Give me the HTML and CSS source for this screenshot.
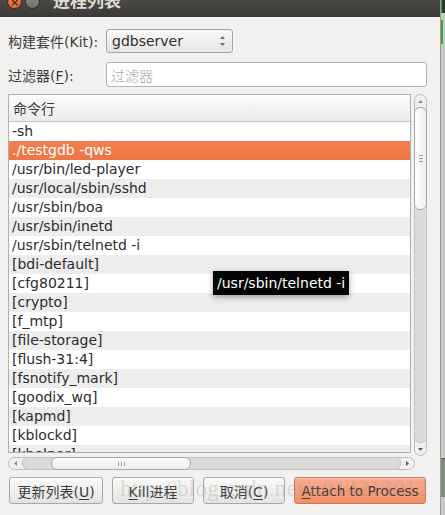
FILE: index.html
```html
<!DOCTYPE html>
<html>
<head>
<meta charset="utf-8">
<link rel="stylesheet" href="styles.css">
</head>
<body>
<div class="screen">
  <div class="dialog">
    <div class="titlebar">
      <span class="wbtn close">×</span>
      <span class="wbtn mini"></span>
      <span class="title">进程列表</span>
    </div>
    <div class="content">
      <div class="form">
        <label class="lbl">构建套件(Kit):</label>
        <div class="combo">
          <span>gdbserver</span>
          <svg class="spin" width="7" height="14" viewBox="0 0 7 14"><path d="M1 5 L3.5 2 L6 5 Z" fill="#6a6a6a"/><path d="M1 9 L3.5 12 L6 9 Z" fill="#6a6a6a"/></svg>
        </div>
        <label class="lbl">过滤器(<u>F</u>):</label>
        <div class="input">过滤器</div>
      </div>
      <div class="listarea">
        <div class="list">
          <div class="header">命令行</div>
          <div class="rows">
            <div class="row">-sh</div>
            <div class="row sel">./testgdb -qws</div>
            <div class="row">/usr/bin/led-player</div>
            <div class="row">/usr/local/sbin/sshd</div>
            <div class="row">/usr/sbin/boa</div>
            <div class="row">/usr/sbin/inetd</div>
            <div class="row">/usr/sbin/telnetd -i</div>
            <div class="row">[bdi-default]</div>
            <div class="row">[cfg80211]</div>
            <div class="row">[crypto]</div>
            <div class="row">[f_mtp]</div>
            <div class="row">[file-storage]</div>
            <div class="row">[flush-31:4]</div>
            <div class="row">[fsnotify_mark]</div>
            <div class="row">[goodix_wq]</div>
            <div class="row">[kapmd]</div>
            <div class="row">[kblockd]</div>
            <div class="row">[khelper]</div>
          </div>
        </div>
        <div class="vscroll">
          <div class="varrow"><svg width="7" height="5" viewBox="0 0 7 5"><path d="M1 4 L3.5 1 L6 4 Z" fill="#8a8a8a"/></svg></div>
          <div class="vtrough">
            <div class="vthumb"><span class="vgrip"></span></div>
          </div>
          <div class="varrow"><svg width="7" height="5" viewBox="0 0 7 5"><path d="M1 1 L3.5 4 L6 1 Z" fill="#5a5a5a"/></svg></div>
        </div>
      </div>
      <div class="hscroll">
        <div class="harrow"><svg width="5" height="7" viewBox="0 0 5 7"><path d="M4 1 L1 3.5 L4 6 Z" fill="#8a8a8a"/></svg></div>
        <div class="htrough">
          <div class="hthumb"><span class="hgrip"></span></div>
        </div>
        <div class="harrow"><svg width="5" height="7" viewBox="0 0 5 7"><path d="M1 1 L4 3.5 L1 6 Z" fill="#5a5a5a"/></svg></div>
      </div>
      <div class="buttons">
        <button class="btn b1">更新列表(<u>U</u>)</button>
        <button class="btn b2"><u>K</u>ill进程</button>
        <button class="btn b3">取消(<u>C</u>)</button>
        <button class="btn b4 primary"><u>A</u>ttach to Process</button>
      </div>
    </div>
  </div>
  <div class="edge">
    <div class="edge-top"></div>
    <div class="edge-mark"></div>
    <div class="edge-mid"></div>
    <div class="edge-low"></div>
    <div class="edge-bot"></div>
  </div>
  <div class="tooltip">/usr/sbin/telnetd -i</div>
  <div class="watermark">http://blog.csdn.net/u014213012</div>
</div>
</body>
</html>
```

FILE: styles.css
```css
html, body {
  margin: 0;
  padding: 0;
  background: #f2f1f0;
}
body {
  font-family: "DejaVu Sans", "Noto Sans CJK SC", sans-serif;
  font-size: 13.5px;
  color: #3c3c3c;
}
.screen {
  position: relative;
  width: 445px;
  height: 515px;
  display: flex;
  overflow: hidden;
}
.dialog {
  width: 440px;
  height: 515px;
  background: #f2f1f0;
  display: flex;
  flex-direction: column;
}
.titlebar {
  height: 17px;
  flex: none;
  background: linear-gradient(#4a4945, #3a3935);
  display: flex;
  align-items: flex-start;
  overflow: hidden;
}
.wbtn {
  flex: none;
  width: 15px;
  height: 15px;
  border-radius: 50%;
  margin-top: -6px;
  box-sizing: border-box;
}
.close {
  margin-left: 7px;
  background: radial-gradient(circle at 50% 40%, #f8845a, #e05a2a);
  border: 1px solid #3a2a20;
  color: #4a2a1a;
  font-size: 11px;
  line-height: 15px;
  text-align: center;
  font-weight: bold;
}
.mini {
  margin-left: 3px;
  background: linear-gradient(#8f8d87, #6f6d68);
  border: 1px solid #2e2d2a;
}
.title {
  margin-left: 13px;
  margin-top: -10px;
  color: #dfdbd2;
  font-size: 17px;
  font-weight: bold;
  line-height: 20px;
  font-family: "Noto Sans CJK SC", sans-serif;
}
.content {
  flex: 1;
  display: flex;
  flex-direction: column;
  padding: 12px 13px 0 8px;
}
.form {
  display: grid;
  grid-template-columns: 98px 1fr;
  grid-template-rows: 24px 25px;
  row-gap: 9px;
  align-items: center;
}
.lbl {
  font-size: 14px;
  color: #3c3c3c;
  white-space: nowrap;
}
.lbl u, .btn u {
  text-underline-offset: 2px;
}
.combo {
  width: 127px;
  height: 24px;
  box-sizing: border-box;
  border: 1px solid #a6a5a2;
  border-radius: 3px;
  background: linear-gradient(#f9f9f8, #e6e5e3);
  display: flex;
  align-items: center;
  justify-content: space-between;
  padding: 0 6px 0 5px;
  font-size: 14px;
  color: #2e2e2e;
}
.spin {
  display: block;
}
.input {
  height: 25px;
  box-sizing: border-box;
  border: 1px solid #b4b3b0;
  border-radius: 3px;
  background: #ffffff;
  color: #a8a8a8;
  font-size: 14px;
  display: flex;
  align-items: center;
  padding-left: 4px;
  font-family: "Noto Sans CJK SC", sans-serif;
  font-weight: 300;
}
.listarea {
  margin-top: 7px;
  height: 362px;
  flex: none;
  display: flex;
  align-items: flex-start;
  gap: 3px;
}
.list {
  width: 404px;
  height: 359px;
  box-sizing: border-box;
  border: 1px solid #b1b0ad;
  background: #ffffff;
  overflow: hidden;
}
.header {
  height: 27px;
  box-sizing: border-box;
  border-bottom: 1px solid #c6c5c2;
  background: linear-gradient(#fbfbfb, #ebebea);
  padding-left: 4px;
  display: flex;
  align-items: center;
  font-size: 14px;
  color: #3c3c3c;
}
.row {
  height: 19px;
  line-height: 19px;
  padding-left: 3px;
  white-space: nowrap;
  color: #2c2c2c;
  font-size: 14px;
  background: #ffffff;
}
.row:nth-child(even) {
  background: #ededed;
}
.row.sel {
  background: linear-gradient(#f3814f, #ee7444);
  color: #ffffff;
}
.vscroll {
  width: 13px;
  height: 362px;
  box-sizing: border-box;
  border: 1px solid #bdbcb9;
  border-radius: 7px;
  background: #f1f0ef;
  display: flex;
  flex-direction: column;
  align-items: stretch;
}
.varrow {
  height: 12px;
  flex: none;
  display: flex;
  align-items: center;
  justify-content: center;
}
.vtrough {
  flex: 1;
  background: #dcdbd9;
  border-radius: 6px;
  border: 1px solid #c4c3c0;
  margin: 0 -1px;
  display: flex;
  flex-direction: column;
}
.vthumb {
  height: 103px;
  margin: -1px;
  box-sizing: border-box;
  border: 1px solid #a9a8a5;
  border-radius: 6px;
  background: linear-gradient(90deg, #fdfdfd, #eeeeed);
  display: flex;
  align-items: center;
  justify-content: center;
}
.vgrip {
  width: 4px;
  height: 7px;
  background: repeating-linear-gradient(#9a9a9a 0 1px, transparent 1px 3px);
}
.hscroll {
  margin-top: 1px;
  width: 407px;
  height: 13px;
  flex: none;
  box-sizing: border-box;
  border: 1px solid #bdbcb9;
  border-radius: 7px;
  background: #f1f0ef;
  display: flex;
  align-items: stretch;
}
.harrow {
  width: 13px;
  flex: none;
  display: flex;
  align-items: center;
  justify-content: center;
}
.htrough {
  flex: 1;
  background: #dcdbd9;
  border-radius: 6px;
  border: 1px solid #c4c3c0;
  margin: -1px 0;
  display: flex;
}
.hthumb {
  width: 140px;
  margin: -1px 0 -1px 28px;
  box-sizing: border-box;
  border: 1px solid #a9a8a5;
  border-radius: 6px;
  background: linear-gradient(#fdfdfd, #eeeeed);
  display: flex;
  align-items: center;
  justify-content: center;
}
.hgrip {
  width: 7px;
  height: 4px;
  background: repeating-linear-gradient(90deg, #9a9a9a 0 1px, transparent 1px 3px);
}
.buttons {
  margin-top: 7px;
  display: flex;
  gap: 9px;
  padding-left: 1px;
}
.btn {
  height: 27px;
  box-sizing: border-box;
  border: 1px solid #a9a8a5;
  border-radius: 3px;
  background: linear-gradient(#fafaf9, #e4e3e1);
  font-family: "DejaVu Sans", "Noto Sans CJK SC", sans-serif;
  font-size: 14px;
  color: #3c3c3c;
  padding: 0;
  box-shadow: inset 0 1px 0 #ffffff;
}
.b1 { width: 94px; }
.b2 { width: 82px; }
.b3 { width: 82px; }
.b4 { width: 132px; font-size: 13.5px; }
.primary {
  border-color: #c97a5a;
  background: linear-gradient(#f9ad90, #f28e67);
  box-shadow: inset 0 1px 0 #fcc5ae;
  color: #3c3c3c;
}
.edge {
  width: 5px;
  height: 515px;
  box-sizing: border-box;
  border-left: 1px solid #9c9c9a;
  background: #c9c9c7;
  display: flex;
  flex-direction: column;
}
.edge-top {
  height: 13px;
  background: #2e3a2c;
  border-left: 1px solid #3a9a3a;
}
.edge-mark {
  height: 24px;
  background: #c9c9c7;
  border-left: 2px solid #4aa040;
  margin-top: 7px;
}
.edge-mid {
  flex: 1;
}
.edge-low {
  height: 38px;
  background: #7e8c7e;
  border-top: 1px solid #5a5a5a;
}
.edge-bot {
  height: 18px;
}
.tooltip {
  position: absolute;
  left: 213px;
  top: 271px;
  width: 136px;
  height: 24px;
  box-sizing: border-box;
  background: #050505;
  color: #ffffff;
  font-size: 14px;
  line-height: 24px;
  padding-left: 4px;
  white-space: nowrap;
  box-shadow: 0 2px 6px rgba(0, 0, 0, 0.35);
}
.watermark {
  position: absolute;
  left: 120px;
  top: 476px;
  font-family: "Liberation Serif", serif;
  font-size: 23px;
  color: rgba(150, 150, 150, 0.28);
  white-space: nowrap;
  pointer-events: none;
  letter-spacing: 0.3px;
}
```
